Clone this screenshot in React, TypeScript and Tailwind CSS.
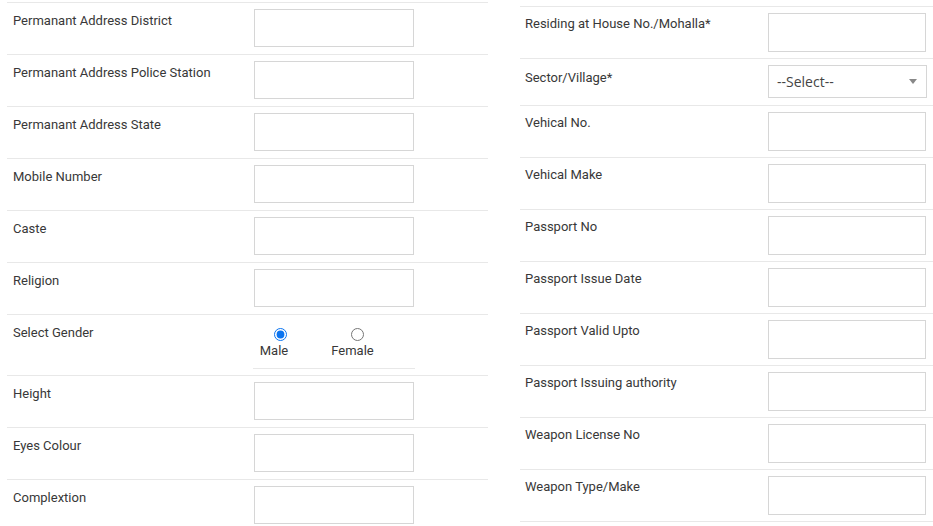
import React from "react";

const font = { fontFamily: "Roboto, 'Noto Sans', Arial, sans-serif" };

function Input({ h = "h-[38px]", w = "w-[160px]", mt = "mt-[6px]" }: { h?: string; w?: string; mt?: string }) {
  return <div className={`${mt} ${w} ${h} border border-[#d6d6d6] bg-white`} />;
}

function LeftRow({ label }: { label: string }) {
  return (
    <div className="flex h-[52px] border-t border-[#e8e8e8]">
      <div className="w-[247px] pl-[6px] pt-[8px] leading-[20px]">{label}</div>
      <Input />
    </div>
  );
}

function RightRow({ label }: { label: string }) {
  return (
    <div className="flex h-[52px] border-t border-[#e8e8e8]">
      <div className="w-[248px] pl-[5px] pt-[7px] leading-[20px]">{label}</div>
      <Input h="h-[39px]" w="w-[158px]" />
    </div>
  );
}

export default function App() {
  const left1 = [
    "Permanant Address District",
    "Permanant Address Police Station",
    "Permanant Address State",
    "Mobile Number",
    "Caste",
    "Religion",
  ];
  const left2 = ["Height", "Eyes Colour", "Complextion"];
  const right = [
    "Vehical No.",
    "Vehical Make",
    "Passport No",
    "Passport Issue Date",
    "Passport Valid Upto",
    "Passport Issuing authority",
    "Weapon License No",
    "Weapon Type/Make",
  ];
  return (
    <div className="w-[933px] h-[526px] overflow-hidden bg-white text-[13px] text-[#383838]" style={font}>
      <div className="flex">
        <div className="ml-[7px] w-[481px] pt-[2px]">
          {left1.map((l) => (
            <LeftRow key={l} label={l} />
          ))}
          <div className="flex h-[61px] border-t border-[#e8e8e8]">
            <div className="w-[246px] pl-[6px] pt-[8px] leading-[20px]">Select Gender</div>
            <div className="mt-[9px] h-[45px] w-[162px] border-b border-[#e8e8e8] flex">
              <label className="w-[42px] flex flex-col items-center">
                <input type="radio" name="g" defaultChecked className="m-0 mt-[4px] ml-[12px] w-[13px] h-[13px] accent-[#0b74f0]" />
                <span className="leading-[18px] mt-[1px]">Male</span>
              </label>
              <label className="w-[115px] flex flex-col items-center">
                <input type="radio" name="g" className="m-0 mt-[4px] ml-[10px] w-[13px] h-[13px]" />
                <span className="leading-[18px] mt-[1px]">Female</span>
              </label>
            </div>
          </div>
          {left2.map((l) => (
            <LeftRow key={l} label={l} />
          ))}
          <div className="border-t border-[#e8e8e8]" />
        </div>
        <div className="ml-[32px] flex-1 pt-[6px]">
          <RightRow label="Residing at House No./Mohalla*" />
          <div className="flex h-[47px] border-t border-[#e8e8e8]">
            <div className="w-[248px] pl-[5px] pt-[9px] leading-[20px]">Sector/Village*</div>
            <div className="mt-[6px] w-[159px] h-[33px] border border-[#d6d6d6] flex items-center justify-between pl-[8px] pr-[9px] text-[14px] text-[#444] font-['Open_Sans',sans-serif]">
              <span>--Select--</span>
              <svg width="8" height="5" viewBox="0 0 8 5">
                <path d="M0 0 H8 L4 5 Z" fill="#888" />
              </svg>
            </div>
          </div>
          {right.map((l) => (
            <RightRow key={l} label={l} />
          ))}
          <div className="border-t border-[#e8e8e8]" />
        </div>
      </div>
    </div>
  );
}
